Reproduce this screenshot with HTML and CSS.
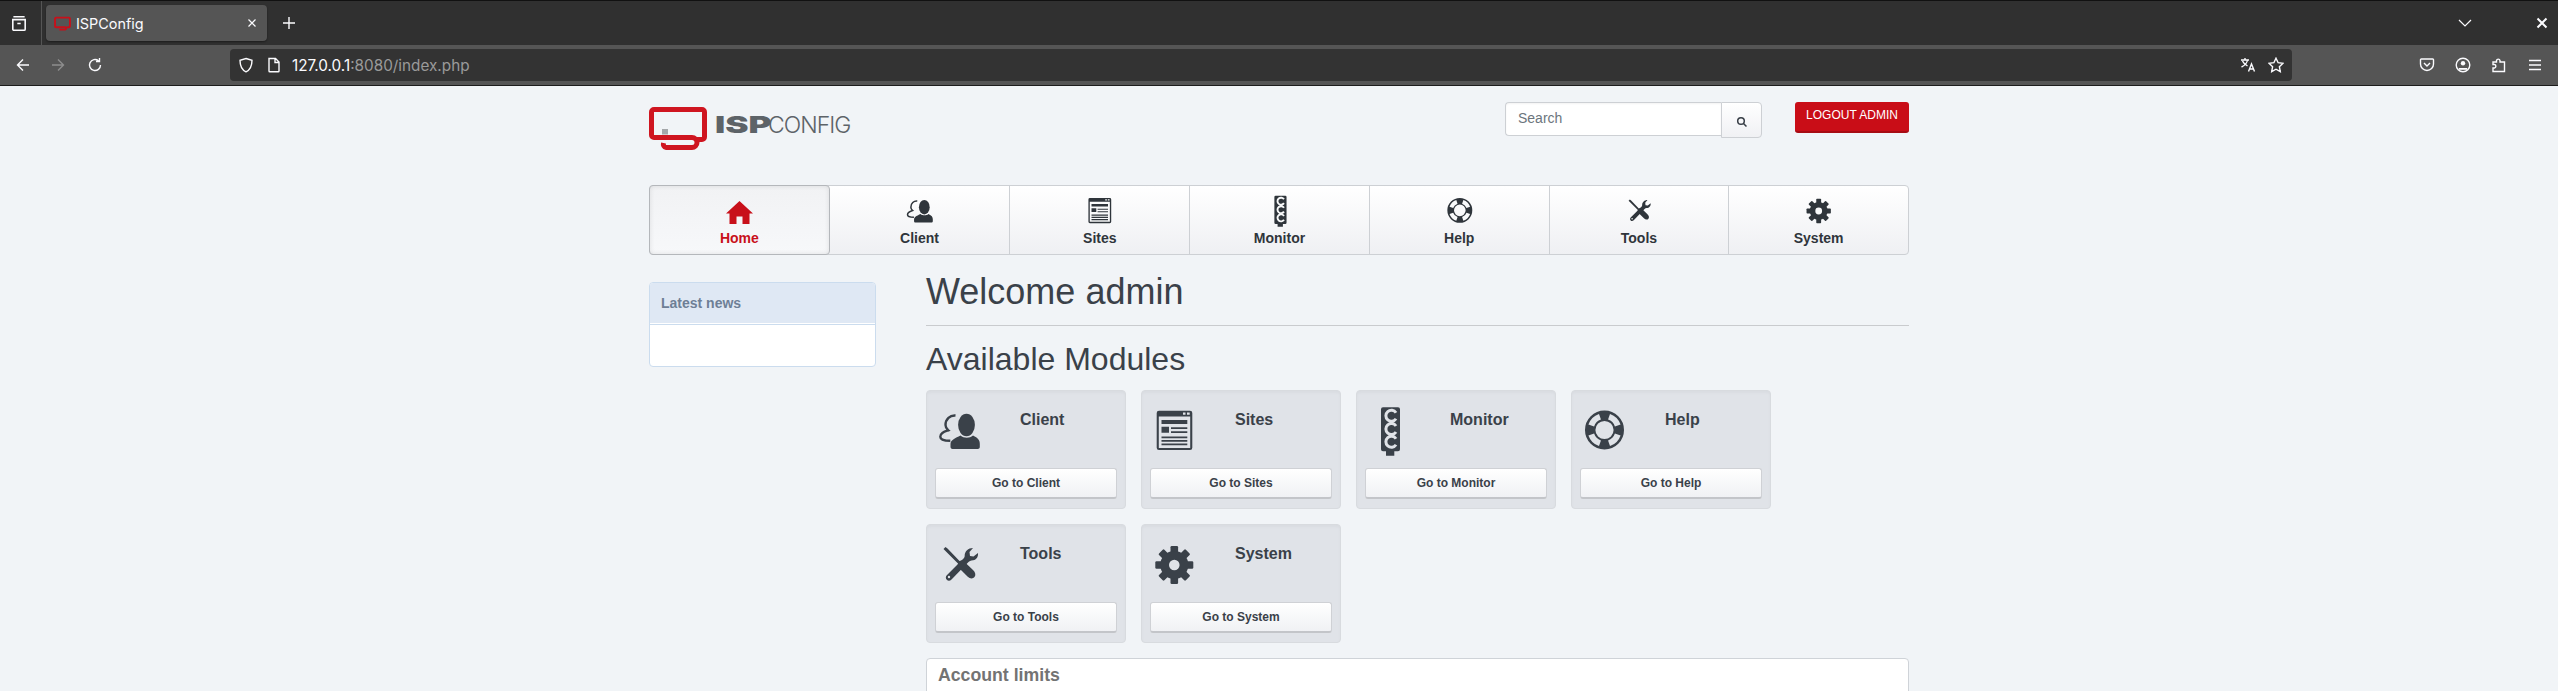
FILE: index.html
```html
<!DOCTYPE html>
<html lang="en">
<head>
<meta charset="utf-8">
<title>ISPConfig</title>
<link rel="stylesheet" href="styles.css">
</head>
<body>
<svg class="defs" width="0" height="0" aria-hidden="true">
  <symbol id="i-client" viewBox="0 -4 42 50">
    <ellipse cx="28.5" cy="15" rx="8.4" ry="11.3" fill="currentColor"/>
    <path d="M12.500 37v-3c0-4 5-6 10-8.500 3.500 3 9 3 12.500 0 5 2.500 6.800 4.500 6.800 8.500v3c0 1-1 2-2 2h-25.300c-1 0-2-1-2-2z" fill="currentColor"/>
    <path d="M17.500 5.500c-5.500-.5-10 3.500-10 9.500 0 2 1 3.800 2.800 5.300-4 1.500-8 2.500-8 6.500 0 3 4 4 10 4" fill="none" stroke="currentColor" stroke-width="2.400"/>
  </symbol>
  <symbol id="i-sites" viewBox="0 -4 42 50">
    <path fill="currentColor" fill-rule="evenodd" d="M6 .7h31a2.300 2.300 0 0 1 2.300 2.300v34.700a2.300 2.300 0 0 1-2.300 2.300h-31a2.300 2.300 0 0 1-2.300-2.300v-34.700a2.300 2.300 0 0 1 2.300-2.300zM5.800 6.500v31.400h31.400v-31.400zM30 2.500v2.200h2.500v-2.200zM34 2.500v2.200h2.700v-2.200z"/>
    <path fill="currentColor" d="M8.500 10h25.800v4h-25.800zM8.500 16.700h7.500v6h-7.500zM18 17.300h16.300v1.800h-16.300zM18 21.300h16.300v1.800h-16.300zM8.500 26.500h25.800v1.800h-25.800zM8.500 30h25.800v1.800h-25.800zM8.500 33.500h25.800v1.800h-25.800z"/>
  </symbol>
  <symbol id="i-monitor" viewBox="0 -4 42 50">
    <path fill="currentColor" d="M15 -2.700h15a2 2 0 0 1 2 2v40a2 2 0 0 1-2 2h-3.700v4.400h-8.300v-4.400h-3a2 2 0 0 1-2-2v-40a2 2 0 0 1 2-2z"/>
    <g class="holes">
      <path d="M28 2.700a5.500 5.500 0 1 0 0 6M28 16a5.500 5.500 0 1 0 0 6M28 28.700a5.500 5.500 0 1 0 0 6"/>
    </g>
  </symbol>
  <symbol id="i-help" viewBox="0 -4 42 50">
    <circle cx="21.500" cy="20" r="14.300" fill="none" stroke="currentColor" stroke-width="10.400"/>
    <circle class="buoy" cx="21.500" cy="20" r="14" pathLength="360"/>
  </symbol>
  <symbol id="i-tools" viewBox="0 -4 42 50">
    <path d="M5.500 5l2-2 2 1.500 12 12.500 3-1 10.500 10c2.500 2.500 3 5 1.500 7s-4.500 2-7-.5l-10-10 .5-3-12.500-12.500z" fill="currentColor"/>
    <path d="M40 9c.5 4-2 7.500-6.500 7.500-1 0-2 .5-3 1.500l-17 17.500c-1.500 1.500-3.500 1.500-4.700.3-1.300-1.300-1.300-3.300 0-4.600l17.200-17.200c.6-.7.7-1.500.7-2.500 0-4 3.500-7.500 8.300-7.500l-3.500 4 .5 4 3.500.5z" fill="currentColor"/>
    <circle class="hole-dot" cx="11" cy="33" r="1.200"/>
  </symbol>
  <symbol id="i-system" viewBox="0 -4 42 50">
    <g fill="currentColor">
      <rect x="17.500" y="2" width="7.600" height="38" rx="1.200"/>
      <rect x="17.500" y="2" width="7.600" height="38" rx="1.200" transform="rotate(45 21.300 21)"/>
      <rect x="17.500" y="2" width="7.600" height="38" rx="1.200" transform="rotate(90 21.300 21)"/>
      <rect x="17.500" y="2" width="7.600" height="38" rx="1.200" transform="rotate(135 21.300 21)"/>
      <circle cx="21.300" cy="21" r="14"/>
    </g>
    <circle class="hole-fill" cx="21.300" cy="21" r="5.300"/>
  </symbol>
</svg>

<header class="browser">
  <div class="tabbar">
    <div class="tabbar-left">
      <svg class="ff" viewBox="0 0 16 16"><path d="M3 2.500h10M2.500 5h11v8.500a1 1 0 0 1-1 1h-9a1 1 0 0 1-1-1zM6.500 8.500h3"/></svg>
    </div>
    <div class="tab">
      <svg class="fav" viewBox="0 0 16 14"><path d="M12 10.500h2a1 1 0 0 0 1-1v-7a1 1 0 0 0-1-1H2a1 1 0 0 0-1 1v7a1 1 0 0 0 1 1h8.500a1.200 1.200 0 0 1 0 2.300H5"/></svg>
      <span class="tab-title">ISPConfig</span>
      <svg class="ff tab-x" viewBox="0 0 16 16"><path d="M4 4l8 8M12 4l-8 8"/></svg>
    </div>
    <svg class="ff newtab" viewBox="0 0 16 16"><path d="M8 2v12M2 8h12"/></svg>
    <svg class="ff chev" viewBox="0 0 16 16"><path d="M2 5l6 6 6-6"/></svg>
    <svg class="ff closewin" viewBox="0 0 16 16"><path d="M3.500 3.500l9 9M12.500 3.500l-9 9"/></svg>
  </div>
  <div class="toolbar">
    <svg class="ff back" viewBox="0 0 16 16"><path d="M14 8H2.500M8 2.500L2.500 8 8 13.500"/></svg>
    <svg class="ff fwd" viewBox="0 0 16 16"><path d="M2 8h11.500M8 2.500L13.500 8 8 13.500"/></svg>
    <svg class="ff reload" viewBox="0 0 16 16"><path d="M13.500 8a5.500 5.500 0 1 1-2-4.200M12.500 1v3.500H9"/></svg>
    <div class="urlbar">
      <svg class="ff shield" viewBox="0 0 16 16"><path d="M8 1.500l6 1.800c0 6-1.500 9.500-6 11.500-4.500-2-6-5.500-6-11.500z"/></svg>
      <svg class="ff pagei" viewBox="0 0 16 16"><path d="M3 1.500h6.500L13 5v9a.8.8 0 0 1-.8.800H3.800A.8.8 0 0 1 3 14zM9 1.500V5.500h4"/></svg>
      <span class="url"><span class="url-host">127.0.0.1</span>:8080/index.php</span>
      <svg class="ff translate" viewBox="0 0 16 16"><path d="M1 3h8M5 1v2M7.500 3c-.5 3-3 5.500-6 7M2.500 4c.8 2 2.500 3.500 5 5M8.500 14.500l3-7.500 3 7.500M9.700 12h3.600"/></svg>
      <svg class="ff star" viewBox="0 0 16 16"><path d="M8 1.200l2.100 4.500 4.900.6-3.600 3.400.9 4.900L8 12.200l-4.300 2.400.9-4.900L1 6.300l4.900-.6z"/></svg>
    </div>
    <svg class="ff pocket" viewBox="0 0 16 16"><path d="M2.300 2h11.400a.8.8 0 0 1 .8.800v4.200a6.500 6.500 0 0 1-13 0V2.800a.8.800 0 0 1 .8-.800zM5 6l3 3 3-3"/></svg>
    <svg class="ff account" viewBox="0 0 16 16"><circle cx="8" cy="8" r="6.800"/><circle class="solid" cx="8" cy="6.300" r="2.200"/><path class="solid" d="M3.800 11h8.400v1.800H3.800z"/></svg>
    <svg class="ff ext" viewBox="0 0 16 16"><path d="M2 14.500v-3.500h1.500a1.800 1.800 0 0 0 0-3.500H2V5h3.500V3.500a1.800 1.800 0 0 1 3.500 0V5h4.500v9.500z"/></svg>
    <svg class="ff menu" viewBox="0 0 16 16"><path d="M2 3.500h12M2 8h12M2 12.500h12"/></svg>
  </div>
</header>

<div class="page">
  <div class="top">
    <div class="logo">
      <svg class="logo-mark" viewBox="0 0 58 44"><path class="logo-red" d="M47 32.500h6a2.500 2.500 0 0 0 2.500-2.500V5A2.500 2.500 0 0 0 53 2.500H5A2.500 2.500 0 0 0 2.500 5v23A2.500 2.500 0 0 0 5 30.500h38a4.300 4.300 0 0 1 0 10H17c-2 0-3-2.500-2.500-4.500"/><rect class="logo-dot" x="13" y="22" width="6" height="5.500"/></svg>
      <span class="logo-text"><b class="logo-isp">ISP</b><span class="logo-config">CONFIG</span></span>
    </div>
    <form class="search">
      <input class="search-input" type="text" placeholder="Search">
      <button class="search-btn" type="button" aria-label="Search">
        <svg class="search-ic" viewBox="0 0 12 12"><circle cx="5" cy="5" r="3.300"/><path d="M7.500 7.500l3 3"/></svg>
      </button>
    </form>
    <a class="logout">LOGOUT ADMIN</a>
  </div>

  <nav class="mainnav">
    <a class="nav-item active"><svg class="nav-home" viewBox="0 0 27 23"><path d="M13.500 0L27 12.500h-3.500V23H16.500v-7.500h-6V23H3.500V12.500H0z"/></svg><span>Home</span></a>
    <a class="nav-item"><svg class="nav-ic"><use href="#i-client"/></svg><span>Client</span></a>
    <a class="nav-item"><svg class="nav-ic"><use href="#i-sites"/></svg><span>Sites</span></a>
    <a class="nav-item"><svg class="nav-ic"><use href="#i-monitor"/></svg><span>Monitor</span></a>
    <a class="nav-item"><svg class="nav-ic"><use href="#i-help"/></svg><span>Help</span></a>
    <a class="nav-item"><svg class="nav-ic"><use href="#i-tools"/></svg><span>Tools</span></a>
    <a class="nav-item"><svg class="nav-ic"><use href="#i-system"/></svg><span>System</span></a>
  </nav>

  <div class="columns">
    <aside class="news">
      <div class="news-head">Latest news</div>
      <div class="news-body"></div>
    </aside>
    <main class="main">
      <h1 class="title">Welcome admin</h1>
      <hr class="rule">
      <h2 class="subtitle">Available Modules</h2>
      <div class="modules">
        <section class="card"><svg class="card-ic"><use href="#i-client"/></svg><h3 class="card-title">Client</h3><button class="card-btn" type="button">Go to Client</button></section>
        <section class="card"><svg class="card-ic"><use href="#i-sites"/></svg><h3 class="card-title">Sites</h3><button class="card-btn" type="button">Go to Sites</button></section>
        <section class="card"><svg class="card-ic"><use href="#i-monitor"/></svg><h3 class="card-title">Monitor</h3><button class="card-btn" type="button">Go to Monitor</button></section>
        <section class="card"><svg class="card-ic"><use href="#i-help"/></svg><h3 class="card-title">Help</h3><button class="card-btn" type="button">Go to Help</button></section>
        <section class="card"><svg class="card-ic"><use href="#i-tools"/></svg><h3 class="card-title">Tools</h3><button class="card-btn" type="button">Go to Tools</button></section>
        <section class="card"><svg class="card-ic"><use href="#i-system"/></svg><h3 class="card-title">System</h3><button class="card-btn" type="button">Go to System</button></section>
      </div>
      <section class="limits"><h3 class="limits-title">Account limits</h3></section>
    </main>
  </div>
</div>
</body>
</html>
```
FILE: styles.css
```css
* { box-sizing: border-box; }
html, body { margin: 0; height: 691px; overflow: hidden; }
body { background: #f1f4f7; font-family: "Liberation Sans", Arial, sans-serif; color: #3a4149; }
.defs { position: absolute; }

/* Browser chrome */
.browser { height: 86px; background: #2f2f2f; border-top: 1px solid #111; border-bottom: 1px solid #1c1c1c; }
.ff { width: 16px; height: 16px; flex: none; fill: none; stroke: #fbfbfe; stroke-width: 1.400; }
.tabbar { height: 44px; display: flex; align-items: center; background: #303030; }
.tabbar-left { width: 42px; height: 44px; display: flex; align-items: center; justify-content: center; border-right: 1px solid #555; }
.tabbar-left .ff { margin-left: -4px; width: 18px; height: 18px; }
.tab { width: 221px; height: 36px; margin-left: 4px; padding: 0 8px; background: #555; border-radius: 4px; display: flex; align-items: center; box-shadow: 0 1px 2px rgba(0,0,0,.4); }
.fav { width: 17px; height: 15px; fill: none; stroke: #c8101a; stroke-width: 1.800; flex: none; }
.tab-title { margin-left: 5px; font: 400 14.400px Inter, sans-serif; color: #fbfbfe; }
.tab-x { margin-left: auto; width: 14px; height: 14px; }
.newtab { margin-left: 14px; }
.chev { margin-left: auto; stroke-width: 1.200; }
.closewin { margin-left: 61px; margin-right: 8px; stroke-width: 2; width: 16px; }
.toolbar { height: 40px; background: #555; display: flex; align-items: center; padding-left: 15px; }
.fwd { margin-left: 19px; stroke: #8d8d8d; }
.reload { margin-left: 21px; }
.urlbar { width: 2062px; height: 32px; margin-left: 127px; background: #333; border-radius: 4px; display: flex; align-items: center; padding: 0 8px; }
.shield { margin-right: 12px; }
.pagei { margin-right: 10px; }
.url { font: 400 15.300px Inter, sans-serif; color: #9a9a9a; }
.url-host { color: #fbfbfe; }
.translate { margin-left: auto; }
.star { margin-left: 12px; }
.pocket { margin-left: 127px; }
.account { margin-left: 20px; }
.solid { fill: #fbfbfe; stroke: none; }
.ext { margin-left: 20px; }
.menu { margin-left: 20px; }

/* Page */
.page { width: 1260px; margin: 0 auto; padding-top: 16px; }
.top { display: flex; align-items: flex-start; height: 83px; }
.logo { display: flex; align-items: center; margin-top: 5px; }
.logo-mark { width: 58px; height: 44px; flex: none; fill: none; }
.logo-red { stroke: #cf1520; stroke-width: 5; fill: none; }
.logo-dot { fill: #a4a7aa; }
.logo-text { margin-left: 8px; margin-top: -8px; font-size: 23px; line-height: 26px; color: #5d6368; white-space: nowrap; }
.logo-isp { display: inline-block; width: 53px; transform: scaleX(1.520); transform-origin: left center; font-family: Inter, sans-serif; font-weight: 900; }
.logo-config { font-family: Inter, sans-serif; font-weight: 300; letter-spacing: -1px; }

.search { display: flex; align-items: flex-start; margin: 0 0 0 auto; }
.search-input { width: 216px; height: 34px; padding: 0 12px 2px; border: 1px solid #cdd0d4; border-right: 0; border-radius: 4px 0 0 4px; background: #fff; font: 14px "Liberation Sans", sans-serif; color: #555; box-shadow: inset 0 1px 2px rgba(0,0,0,.05); }
.search-input::placeholder { color: #6c757d; opacity: 1; }
.search-btn { width: 41px; height: 36px; padding: 0; border: 1px solid #cdd0d4; border-radius: 0 4px 4px 0; background: linear-gradient(#fff, #f0f1f4); display: flex; align-items: center; justify-content: center; }
.search-ic { width: 12px; height: 12px; fill: none; stroke: #373e46; stroke-width: 1.500; margin-top: 3px; }
.logout { width: 114px; height: 31px; margin-left: 33px; background: #c90d17; border-bottom: 2px solid #a70c14; border-radius: 3px; color: #fff; font-size: 12px; line-height: 27px; text-align: center; }

.mainnav { height: 70px; display: grid; grid-template-columns: repeat(7, 1fr); border: 1px solid #cdd0d4; border-radius: 4px; background: linear-gradient(#fff, #eff0f3); color: #2f353b; --hole: #f8f9fa; }
.nav-item { display: flex; flex-direction: column; align-items: center; border-left: 1px solid #cdd0d4; font-size: 14px; font-weight: 700; line-height: 16px; padding-top: 9px; }
.nav-item:first-child, .nav-item.active + .nav-item { border-left: 0; }
.nav-item span { margin-top: 3px; }
.nav-item.active { color: #c8101a; margin: -1px 0 -1px -1px; padding-top: 15px; border: 1px solid #b4b7bb; border-radius: 4px; background: linear-gradient(#f1f2f4, #f7f8fa); box-shadow: inset 0 0 5px rgba(0,0,0,.1); }
.nav-item.active span { margin-top: 2px; }
.nav-home { width: 27px; height: 23px; fill: #c8101a; margin-bottom: 4px; }
.nav-ic { width: 27px; height: 32px; }

.columns { display: flex; margin-top: 17px; align-items: flex-start; }
.news { width: 227px; margin-top: 10px; border: 1px solid #cbdcee; border-radius: 4px; overflow: hidden; background: #fff; }
.news-head { height: 41px; padding-left: 11px; background: #dfe8f4; border-bottom: 1px solid #fff; color: #6e7f96; font-size: 14px; font-weight: 700; line-height: 40px; }
.news-body { height: 42px; border-top: 1px solid #cbdcee; }
.main { width: 983px; margin-left: 50px; }
.title { margin: 0; font-size: 36px; font-weight: 400; line-height: 40px; color: #3a4149; }
.rule { margin: 13px 0 0; height: 1px; border: 0; background: #c9cbce; }
.subtitle { margin: 16px 0 0; font-size: 32px; font-weight: 400; line-height: 35px; }
.modules { margin-top: 13px; display: grid; grid-template-columns: repeat(auto-fill, 200px); gap: 15px; }
.card { height: 119px; padding: 20px 8px 0; background: #e0e3e8; border: 1px solid #d8dbdf; border-radius: 4px; color: #3a4149; --hole: #e0e3e8; display: grid; grid-template-columns: 77px 1fr; grid-template-rows: 57px auto; box-shadow: inset 0 2px 3px rgba(0,0,0,.03); }
.card-ic { width: 42px; height: 50px; margin: -5px 0 0 3px; }
.card-title { margin: 0 0 0 8px; font-size: 16px; font-weight: 700; line-height: 18px; }
.card-btn { grid-column: 1 / -1; height: 31px; padding: 0 0 1px; border: 1px solid #cfd1d5; border-bottom: 2px solid #c3c5c9; border-radius: 3px; background: linear-gradient(#fff, #f0f1f4); font: 700 12px "Liberation Sans", sans-serif; color: #3a4149; }
.holes path { fill: none; stroke: var(--hole); stroke-width: 3; }
.buoy { fill: none; stroke: var(--hole); stroke-width: 6; stroke-dasharray: 52 38; stroke-dashoffset: -19; }
.hole-dot { fill: var(--hole); }
.hole-fill { fill: var(--hole); }
.limits { margin-top: 15px; height: 60px; background: #fff; border: 1px solid #cfd3d8; border-radius: 4px; padding: 6px 11px; }
.limits-title { margin: 0; font-size: 17.700px; font-weight: 700; line-height: 20px; color: #737373; }
```
